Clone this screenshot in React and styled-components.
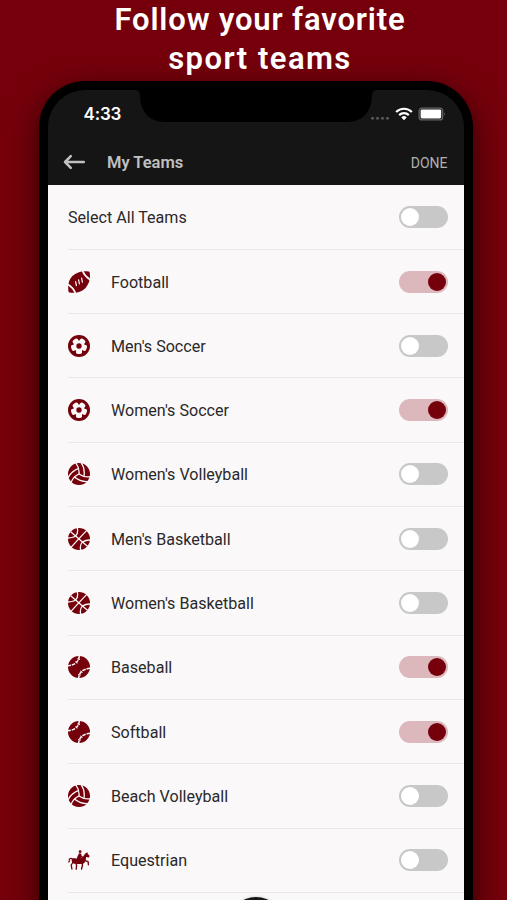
import React from "react";
import styled, { createGlobalStyle } from "styled-components";

const maroon = "#75000b";
const paper = "#faf8f9";

const GlobalStyle = createGlobalStyle`
  *, *::before, *::after { box-sizing: border-box; }
  body { margin: 0; background: ${maroon}; font-family: Roboto, sans-serif; }
`;

const Page = styled.main`
  width: 507px;
  height: 900px;
  overflow: hidden;
  background: ${maroon};
`;

const Headline = styled.h1`
  height: 81px;
  margin: 0;
  padding-left: 13px;
  color: #fff;
  text-align: center;
  white-space: nowrap;
  font: 600 31px/39px Roboto, sans-serif;
`;

const HeadlineLine = styled.span`
  display: block;
  letter-spacing: ${(p) => p.$tracking}px;
`;

const Phone = styled.section`
  width: 434px;
  height: 880px;
  margin-left: 39px;
  padding: 9px 9px 0;
  border-radius: 46px 46px 0 0;
  background: #000;
  box-shadow: 0 10px 28px 2px rgba(20, 0, 2, 0.65);
`;

const Screen = styled.div`
  position: relative;
  height: 871px;
  overflow: hidden;
  border-radius: 37px 37px 0 0;
  background: #151515;
`;

const Header = styled.header`
  height: 95px;
`;

const Notch = styled.svg`
  position: absolute;
  top: 0;
  left: 88px;
`;

const StatusBar = styled.div`
  display: flex;
  align-items: center;
  justify-content: space-between;
  height: 48px;
  padding: 0 18px 0 35.5px;
`;

const Clock = styled.time`
  color: #fff;
  font: 600 17px/20px Inter, sans-serif;
  letter-spacing: -0.15px;
`;

const StatusIcons = styled.svg`
  display: block;
`;

const NavBar = styled.nav`
  display: flex;
  align-items: center;
  height: 47px;
  padding: 0 16.5px 0 15px;
`;

const BackButton = styled.button`
  display: flex;
  padding: 0;
  border: 0;
  background: none;
`;

const Title = styled.h2`
  margin: 0 auto 0 21px;
  padding-top: 2px;
  color: #c0c0c0;
  font: 600 16.5px/20px Roboto, sans-serif;
`;

const Done = styled.button`
  padding: 3px 0 0;
  border: 0;
  background: none;
  color: #b0b0b0;
  font: 400 14px/18px Roboto, sans-serif;
`;

const List = styled.ul`
  height: 776px;
  margin: 0;
  padding: 0.6px 0 0 20px;
  list-style: none;
  background: ${paper};
`;

const Row = styled.li`
  display: flex;
  align-items: center;
  height: 64.3px;
  padding-right: 16px;
  border-bottom: 1px solid #e9e7e8;
`;

const IconSlot = styled.span`
  display: flex;
  width: 43px;
  color: ${maroon};
`;

const Label = styled.span`
  flex: 1;
  padding-top: 2px;
  color: #2a2829;
  font-size: 16.1px;
  line-height: 22px;
`;

const Toggle = styled.button`
  display: flex;
  align-items: center;
  justify-content: ${(p) => (p.$on ? "flex-end" : "flex-start")};
  width: 49px;
  height: 22px;
  padding: 0 2px;
  border: 0;
  border-radius: 11px;
  background: ${(p) => (p.$on ? "#dcb8bd" : "#c8c8c8")};
`;

const Knob = styled.span`
  width: 18px;
  height: 18px;
  border-radius: 50%;
  background: ${(p) => (p.$on ? maroon : "#fff")};
`;

const FloatingButton = styled.div`
  position: absolute;
  left: 181px;
  top: 807px;
  width: 54px;
  height: 54px;
  border-radius: 50%;
  background: #151515;
  box-shadow: 0 0 3px rgba(0, 0, 0, 0.2);
`;

const Football = () => (
  <svg width="22" height="22" viewBox="0 0 22 22">
    <path d="M20.6.5q1 .1 1.1 1.1C22.5 7 21.6 12.6 17.6 16.9 13.4 21.3 7 22.4 1.6 21.6q-1-.1-1.1-1.1C-.4 15 .4 9.2 4.4 5.1 8.6.8 15-.4 20.6.5z" fill="currentColor" />
    <g fill="none" stroke={paper} strokeLinecap="round">
      <path d="M-.4 13.2Q5.2 16.4 7.6 22.4M14.4-.4Q16.8 5.6 22.4 8.8" strokeWidth="1.7" />
      <path d="M8.4 14.6L7.6 10.6M11.4 12.9l-.8-4M14.4 11.2l-.8-4" strokeWidth="1.2" />
    </g>
  </svg>
);

const Soccer = () => (
  <svg width="22" height="22" viewBox="0 0 22 22">
    <circle cx="11" cy="11" r="11" fill="currentColor" />
    <g fill={paper}>
      <circle cx="11" cy="11" r="5" />
      {[36, 108, 180, 252, 324].map((a) => (
        <rect key={a} x="8" y="3" width="6" height="6" rx="1.8" transform={`rotate(${a} 11 11)`} />
      ))}
    </g>
    <circle cx="11" cy="11" r="2.7" fill="currentColor" />
  </svg>
);

const Volleyball = () => (
  <svg width="22" height="22" viewBox="0 0 22 22">
    <circle cx="11" cy="11" r="11" fill="currentColor" />
    <g fill="none" stroke={paper} strokeWidth="1.35">
      {[0, 120, 240].map((a) => (
        <path key={a} transform={`rotate(${a} 11 11)`} d="M11 11Q11.7 4.8 7.6-.2M15.9 13.8Q17.3 5.6 13.2-.4" />
      ))}
    </g>
  </svg>
);

const Basketball = () => (
  <svg width="22" height="22" viewBox="0 0 22 22">
    <circle cx="11" cy="11" r="11" fill="currentColor" />
    <g fill="none" stroke={paper} strokeWidth="1.3">
      <path d="M18.8 2.4Q13 8.4 3 19.4M2.7 3.7Q9.2 9.4 19.5 18.3" />
      <path d="M9.3-.2Q11.5 9.8-.2 10M22.2 12Q10.5 12.2 12.7 22.2" />
    </g>
  </svg>
);

const Baseball = () => (
  <svg width="22" height="22" viewBox="0 0 22 22">
    <circle cx="11" cy="11" r="11" fill="currentColor" />
    <g fill="none" stroke={paper}>
      <path d="M11.3-.2Q10.7 8.8-.2 9.7M22.2 12.3Q11.3 13.2 10.7 22.2" strokeWidth="1.5" strokeDasharray="3.6 1" />
      <path d="M9.2 2.8l2.7.8M7.4 5.4l2.2 1.7M12.8 19.2l-2.7-.8M14.6 16.6l-2.2-1.7" strokeWidth=".9" />
    </g>
  </svg>
);

const Equestrian = () => (
  <svg width="22" height="20" viewBox="0 0 22 20" fill="none" stroke="currentColor" strokeLinecap="round" strokeLinejoin="round">
    <circle cx="12.1" cy="1.7" r="1.4" fill="currentColor" stroke="none" />
    <path d="M11 3.2l2.2.6.5 2.2 1.8 1-.5 1.1-2-.7-.5 1.2-1 4.2-1.5.1-.3-3-.8-2.2z" fill="currentColor" stroke="none" />
    <path d="M4 8.7c2.1-1 4.5-.2 6.5-.2 3 0 4.2-.9 5.5-3.2 1.2-1.9 2.1-2.3 3.5-3l.2 1.4 2 2.4-.8 1.3-2.8-.4c-.1 3.6-1.2 6.6-3.8 6.9-2.8.3-4.5-.2-6.5-.2-3 .2-4.9-2-3.8-5z" fill="currentColor" stroke="none" />
    <path d="M4.4 9C2.3 7.4.7 9.1 1.4 11.3L.7 12" strokeWidth="1.1" />
    <path d="M5.2 12l-2 3 .7 4M7.6 12.5l1 2.9-.4 3.8M14 12.3l.5 3-1 3.7M16.3 10.3l3.8 1.3.3 3.1" strokeWidth="1.35" />
  </svg>
);

const icons = {
  football: <Football />,
  soccer: <Soccer />,
  volleyball: <Volleyball />,
  basketball: <Basketball />,
  baseball: <Baseball />,
  equestrian: <Equestrian />,
};

const teams = [
  { name: "Select All Teams" },
  { name: "Football", icon: "football", on: true },
  { name: "Men's Soccer", icon: "soccer" },
  { name: "Women's Soccer", icon: "soccer", on: true },
  { name: "Women's Volleyball", icon: "volleyball" },
  { name: "Men's Basketball", icon: "basketball" },
  { name: "Women's Basketball", icon: "basketball" },
  { name: "Baseball", icon: "baseball", on: true },
  { name: "Softball", icon: "baseball", on: true },
  { name: "Beach Volleyball", icon: "volleyball" },
  { name: "Equestrian", icon: "equestrian" },
];

export default function App() {
  return (
    <Page>
      <GlobalStyle />
      <Headline>
        <HeadlineLine $tracking={0.85}>Follow your favorite</HeadlineLine>
        <HeadlineLine $tracking={1.45}>sport teams</HeadlineLine>
      </Headline>
      <Phone>
        <Screen>
          <Header>
            <StatusBar>
              <Clock>4:33</Clock>
              <StatusIcons width="76" height="16" viewBox="0 0 76 16">
                <g fill="#555">
                  <circle cx="2.5" cy="12.3" r="1.5" />
                  <circle cx="7.5" cy="12.3" r="1.5" />
                  <circle cx="12.5" cy="12.3" r="1.5" />
                  <circle cx="17.5" cy="12.3" r="1.5" />
                </g>
                <g fill="none" stroke="#fff" strokeWidth="2.2">
                  <path d="M26.1 6a11.2 11.2 0 0 1 15.8 0" />
                  <path d="M29.2 9.1a6.8 6.8 0 0 1 9.6 0" />
                </g>
                <path d="M34 14.2l-2.7-2.8a3.9 3.9 0 0 1 5.4 0z" fill="#fff" />
                <rect x="49.1" y="2.1" width="23.6" height="11.8" rx="3" fill="none" stroke="#666" strokeWidth="1.2" />
                <rect x="50.6" y="3.6" width="20.6" height="8.8" rx="1.4" fill="#fff" />
                <path d="M74 6.3q1.7 1.7 0 3.4z" fill="#666" />
              </StatusIcons>
            </StatusBar>
            <NavBar>
              <BackButton aria-label="Back">
                <svg width="23" height="16" viewBox="0 0 23 16" fill="none" stroke="#c0c0c0" strokeWidth="2.5" strokeLinecap="round" strokeLinejoin="round">
                  <path d="M7.8 2.2L2 8l5.8 5.8M2 8h18.8" />
                </svg>
              </BackButton>
              <Title>My Teams</Title>
              <Done>DONE</Done>
            </NavBar>
          </Header>
          <Notch width="240" height="33" viewBox="0 0 240 33">
            <path d="M0 0Q4 .5 4 5C4 21 13 32 29 32H211C227 32 236 21 236 5Q236 .5 240 0Z" fill="#000" />
          </Notch>
          <List>
            {teams.map((t) => (
              <Row key={t.name}>
                {t.icon && <IconSlot>{icons[t.icon]}</IconSlot>}
                <Label>{t.name}</Label>
                <Toggle $on={t.on} aria-label={t.name}>
                  <Knob $on={t.on} />
                </Toggle>
              </Row>
            ))}
          </List>
          <FloatingButton />
        </Screen>
      </Phone>
    </Page>
  );
}
